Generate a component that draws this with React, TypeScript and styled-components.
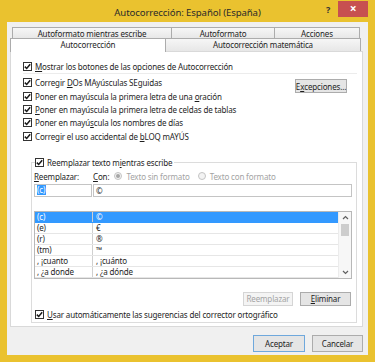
import styled, { createGlobalStyle } from "styled-components";

const GlobalStyle = createGlobalStyle`
  html, body {
    margin: 0;
    padding: 0;
    background: #ffffff;
  }
`;

const Check = () => (
  <CheckBox>
    <svg width="7" height="7" viewBox="0 0 7 7">
      <path d="M0.8 3.6 L2.7 5.5 L6.2 1.2" stroke="#1a1a1a" strokeWidth="1.5" fill="none" />
    </svg>
  </CheckBox>
);

type CheckOptionProps = { children: React.ReactNode };

const CheckOption = ({ children }: CheckOptionProps) => (
  <CheckRow>
    <Check />
    <span>{children}</span>
  </CheckRow>
);

const rows = [
  { from: "(c)", to: "©", selected: true },
  { from: "(e)", to: "€" },
  { from: "(r)", to: "®" },
  { from: "(tm)", to: "™" },
  { from: ", ¡cuanto", to: ", ¡cuánto" },
  { from: ", ¿a donde", to: ", ¿a dónde" },
];

export default function App() {
  return (
    <>
      <GlobalStyle />
      <Window>
        <TitleBar>
          <Title>Autocorrección: Español (España)</Title>
          <Controls>
            <HelpButton>?</HelpButton>
            <CloseButton>×</CloseButton>
          </Controls>
        </TitleBar>
        <Client>
          <Tabs>
            <TabRow>
              <Tab $width={160}>Autoformato mientras escribe</Tab>
              <Tab $width={104}>Autoformato</Tab>
              <Tab $width={86}>Acciones</Tab>
            </TabRow>
            <TabRow $front>
              <Tab $width={156} $active>Autocorrección</Tab>
              <Tab $width={196}>Autocorrección matemática</Tab>
            </TabRow>
          </Tabs>
          <Panel>
            <TopOption>
              <CheckOption>
                <U>M</U>ostrar los botones de las opciones de Autocorrección
              </CheckOption>
            </TopOption>
            <Separator />
            <OptionsBlock>
              <OptionList>
                <CheckOption>
                  Corregir <U>D</U>Os MAyúsculas SEguidas
                </CheckOption>
                <CheckOption>
                  Poner en mayúscula la primera letra de una <U>o</U>ración
                </CheckOption>
                <CheckOption>
                  <U>P</U>oner en mayúscula la primera letra de celdas de tablas
                </CheckOption>
                <CheckOption>
                  Poner en mayú<U>s</U>cula los nombres de días
                </CheckOption>
                <CheckOption>
                  Corregir el uso accidental de <U>b</U>LOQ mAYÚS
                </CheckOption>
              </OptionList>
              <Button $width={52} $small>
                E<U>x</U>cepciones...
              </Button>
            </OptionsBlock>
            <Group>
              <Legend>
                <Check />
                <span>
                  Reemplazar texto m<U>i</U>entras escribe
                </span>
              </Legend>
              <LabelRow>
                <ReplaceLabel>
                  <U>R</U>eemplazar:
                </ReplaceLabel>
                <span>
                  <U>C</U>on:
                </span>
                <Radio $checked />
                <Disabled>Texto sin formato</Disabled>
                <Radio $gap />
                <Disabled>Texto con formato</Disabled>
              </LabelRow>
              <InputRow>
                <Input $width={58}>
                  <Selection>(c)</Selection>
                </Input>
                <Input>©</Input>
              </InputRow>
              <List>
                <ListBody>
                  {rows.map((r) => (
                    <ListRow key={r.from} $selected={r.selected}>
                      <FromCell>{r.from}</FromCell>
                      <ToCell>{r.to}</ToCell>
                    </ListRow>
                  ))}
                </ListBody>
                <ScrollBar>
                  <ScrollArrow>
                    <svg width="7" height="5" viewBox="0 0 7 5">
                      <path d="M1 4 L3.5 1.5 L6 4" stroke="#606060" strokeWidth="1.2" fill="none" />
                    </svg>
                  </ScrollArrow>
                  <Thumb />
                  <ScrollSpace />
                  <ScrollArrow>
                    <svg width="7" height="5" viewBox="0 0 7 5">
                      <path d="M1 1 L3.5 3.5 L6 1" stroke="#606060" strokeWidth="1.2" fill="none" />
                    </svg>
                  </ScrollArrow>
                </ScrollBar>
              </List>
              <GroupButtons>
                <Button $width={50} $disabled>
                  Reemplazar
                </Button>
                <Button $width={51}>
                  <U>E</U>liminar
                </Button>
              </GroupButtons>
              <BottomOption>
                <CheckOption>
                  <U>U</U>sar automáticamente las sugerencias del corrector ortográfico
                </CheckOption>
              </BottomOption>
            </Group>
          </Panel>
          <Footer>
            <Button $width={52} $tall $default>
              Aceptar
            </Button>
            <Button $width={51} $tall>
              Cancelar
            </Button>
          </Footer>
        </Client>
      </Window>
    </>
  );
}

const Window = styled.div`
  width: 375px;
  height: 362px;
  box-sizing: border-box;
  padding: 0 7px 7px;
  background: #eac22f;
  display: flex;
  flex-direction: column;
  font-family: "Noto Sans", "Open Sans", sans-serif;
  font-size: 8px;
  letter-spacing: -0.15px;
  color: #1e1e1e;
`;

const TitleBar = styled.div`
  height: 22px;
  flex: none;
  display: grid;
  grid-template-columns: 1fr auto 1fr;
`;

const Title = styled.div`
  grid-column: 2;
  align-self: center;
  margin-top: 3px;
  font-size: 9.6px;
  letter-spacing: -0.1px;
  color: #2a2a2a;
  white-space: nowrap;
`;

const Controls = styled.div`
  justify-self: end;
  display: flex;
  align-items: flex-start;
`;

const HelpButton = styled.div`
  width: 20px;
  height: 17px;
  margin-top: 1px;
  text-align: center;
  line-height: 17px;
  font-size: 9px;
  font-weight: bold;
  color: #333;
`;

const CloseButton = styled.div`
  width: 30px;
  height: 16px;
  margin-top: 1px;
  background: #c75050;
  color: #ffffff;
  text-align: center;
  line-height: 15px;
  font-size: 12px;
  font-weight: bold;
`;

const Client = styled.div`
  flex: 1;
  background: #f0f0f0;
  padding: 5px 5px 3px 3px;
  display: flex;
  flex-direction: column;
`;

const Tabs = styled.div`
  margin-right: 1px;
  display: flex;
  flex-direction: column;
`;

const TabRow = styled.div<{ $front?: boolean }>`
  display: flex;
  height: ${(p) => (p.$front ? 13 : 11)}px;
  padding-left: ${(p) => (p.$front ? 0 : 2)}px;
`;

const Tab = styled.div<{ $width: number; $active?: boolean }>`
  width: ${(p) => p.$width}px;
  box-sizing: border-box;
  border: 1px solid #acacac;
  border-bottom: none;
  margin-left: -1px;
  &:first-child {
    margin-left: 0;
  }
  background: ${(p) => (p.$active ? "#ffffff" : "linear-gradient(#f6f6f6, #e7e7e7)")};
  height: ${(p) => (p.$active ? "calc(100% + 1px)" : "100%")};
  position: relative;
  z-index: ${(p) => (p.$active ? 2 : 1)};
  text-align: center;
  line-height: 11px;
  white-space: nowrap;
`;

const Panel = styled.div`
  height: 276px;
  box-sizing: border-box;
  flex: none;
  background: #ffffff;
  border: 1px solid #d9d9d9;
  padding: 8px 0 0 12px;
  display: flex;
  flex-direction: column;
`;

const CheckRow = styled.div`
  display: flex;
  align-items: center;
  height: 13.3px;
  white-space: nowrap;
`;

const CheckBox = styled.span`
  width: 9px;
  height: 9px;
  box-sizing: border-box;
  border: 1px solid #333333;
  background: #ffffff;
  display: inline-flex;
  align-items: center;
  justify-content: center;
  flex: none;
  margin-right: 3px;
`;

const U = styled.span`
  text-decoration: underline;
`;

const TopOption = styled.div``;

const Separator = styled.div`
  height: 1px;
  margin: 0 5px 2px 0;
  background: #ececec;
`;

const OptionsBlock = styled.div`
  display: flex;
  justify-content: space-between;
  align-items: flex-start;
`;

const OptionList = styled.div`
  display: flex;
  flex-direction: column;
`;

const Button = styled.div<{
  $width: number;
  $small?: boolean;
  $tall?: boolean;
  $disabled?: boolean;
  $default?: boolean;
}>`
  width: ${(p) => p.$width}px;
  height: ${(p) => (p.$tall ? 17 : 14)}px;
  box-sizing: border-box;
  margin-top: ${(p) => (p.$small ? 3 : 0)}px;
  margin-right: ${(p) => (p.$small ? 15 : 0)}px;
  border: 1px solid
    ${(p) => (p.$disabled ? "#d5d5d5" : p.$default ? "#6fa8dc" : "#acacac")};
  background: ${(p) => (p.$disabled ? "#f4f4f4" : "#e5e5e5")};
  color: ${(p) => (p.$disabled ? "#a3a3a3" : "#1e1e1e")};
  display: flex;
  align-items: center;
  justify-content: center;
  white-space: nowrap;
`;

const Group = styled.fieldset`
  margin: 13px 5px 0 8px;
  padding: 0 4px 0 2px;
  border: 1px solid #dcdcdc;
  height: 167px;
  box-sizing: border-box;
  display: flex;
  flex-direction: column;
`;

const Legend = styled.legend`
  display: flex;
  align-items: center;
  padding: 0 2px 0 0;
  margin-left: 1px;
  height: 13px;
  white-space: nowrap;
`;

const LabelRow = styled.div`
  display: flex;
  align-items: center;
  height: 11px;
  margin-top: 2px;
  white-space: nowrap;
`;

const ReplaceLabel = styled.span`
  width: 59px;
`;

const Radio = styled.span<{ $checked?: boolean; $gap?: boolean }>`
  width: 8px;
  height: 8px;
  box-sizing: border-box;
  border-radius: 50%;
  border: 1px solid #c4c4c4;
  background: #f3f3f3;
  margin: 0 4px 0 ${(p) => (p.$gap ? 8 : 5)}px;
  display: inline-flex;
  align-items: center;
  justify-content: center;
  &::after {
    content: "";
    width: 4px;
    height: 4px;
    border-radius: 50%;
    background: ${(p) => (p.$checked ? "#a6a6a6" : "transparent")};
  }
`;

const Disabled = styled.span`
  color: #a3a3a3;
`;

const InputRow = styled.div`
  display: flex;
  margin-top: 2px;
  height: 13px;
`;

const Input = styled.div<{ $width?: number }>`
  ${(p) => (p.$width ? `width: ${p.$width}px;` : "flex: 1;")}
  box-sizing: border-box;
  border: 1px solid #c4c4c4;
  margin-right: ${(p) => (p.$width ? 1 : 0)}px;
  padding-left: 2px;
  display: flex;
  align-items: center;
  white-space: nowrap;
`;

const Selection = styled.span`
  background: #3399ff;
  color: #ffffff;
  line-height: 10px;
  padding-right: 1px;
`;

const List = styled.div`
  display: flex;
  margin-top: 14px;
  border: 1px solid #b8b8b8;
  height: 68px;
  box-sizing: border-box;
`;

const ListBody = styled.div`
  flex: 1;
  display: flex;
  flex-direction: column;
`;

const ListRow = styled.div<{ $selected?: boolean }>`
  display: grid;
  grid-template-columns: 58px 1fr;
  height: 11px;
  box-sizing: border-box;
  border-bottom: 1px solid ${(p) => (p.$selected ? "#3399ff" : "#e6e6e6")};
  background: ${(p) => (p.$selected ? "#3399ff" : "#ffffff")};
  color: ${(p) => (p.$selected ? "#ffffff" : "#1e1e1e")};
  line-height: 10px;
  white-space: nowrap;
`;

const FromCell = styled.div`
  padding-left: 2px;
  border-right: 1px solid #d0d0d0;
`;

const ToCell = styled.div`
  padding-left: 3px;
`;

const ScrollBar = styled.div`
  width: 12px;
  background: #f7f7f7;
  border-left: 1px solid #ececec;
  display: flex;
  flex-direction: column;
`;

const ScrollArrow = styled.div`
  height: 11px;
  display: flex;
  align-items: center;
  justify-content: center;
`;

const Thumb = styled.div`
  height: 12px;
  margin: 1px 2px 0;
  background: #cdcdcd;
`;

const ScrollSpace = styled.div`
  flex: 1;
`;

const GroupButtons = styled.div`
  display: flex;
  justify-content: flex-end;
  gap: 7px;
  margin: 13px 1px 0 0;
`;

const BottomOption = styled.div`
  margin-top: 2px;
  margin-left: 1px;
`;

const Footer = styled.div`
  display: flex;
  justify-content: flex-end;
  gap: 7px;
  margin-top: 8px;
`;
